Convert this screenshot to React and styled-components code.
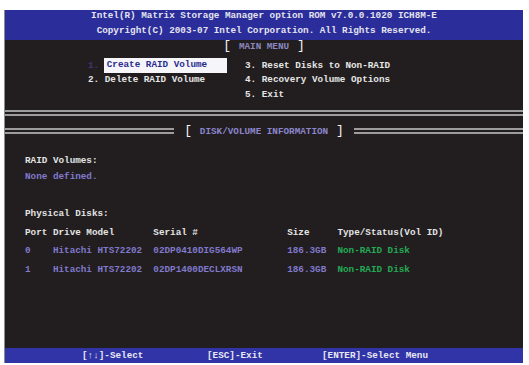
import React from "react";
import styled, { createGlobalStyle } from "styled-components";

const GlobalStyle = createGlobalStyle`
  html, body { margin: 0; padding: 0; background: #ffffff; }
  * { box-sizing: border-box; }
`;

const Screen = styled.div`
  margin: 10px 0 0 4px;
  width: 519px;
  height: 353px;
  background: #221e1f;
  border-left: 1px solid #8c8c8c;
  display: flex;
  flex-direction: column;
  font-family: "Liberation Mono", "DejaVu Sans Mono", monospace;
  font-size: 9.3px;
  font-weight: 700;
  color: #e2e2e2;
  white-space: pre;
  overflow: hidden;
`;

const Header = styled.header`
  height: 30px;
  flex-shrink: 0;
  background: #2b2d9b;
  display: flex;
  flex-direction: column;
  align-items: center;
  color: #e4e4ee;
`;

const HeaderLine = styled.div`
  line-height: ${(p) => p.$h}px;
  margin-top: ${(p) => p.$mt || 0}px;
`;

const Title = styled.div`
  text-align: center;
  line-height: 12px;
  height: 12px;
  color: #f0f0f0;
`;

const Bracket = styled.span`
  font-size: 13px;
  font-weight: 400;
  color: #f2f2f2;
`;

const Dim = styled.span`
  color: ${(p) => p.$c || "#8a84c4"};
`;

const MenuGrid = styled.div`
  margin-top: 6px;
  padding-left: 83px;
  display: grid;
  grid-template-columns: 157px auto;
  grid-auto-rows: 14.5px;
  align-items: center;
`;

const MenuItem = styled.div`
  display: flex;
  align-items: center;
  height: 14.5px;
  color: #e6e6e6;
`;

const Highlight = styled.span`
  display: inline-block;
  width: 123px;
  height: 14.5px;
  line-height: 14.5px;
  margin-left: -1px;
  padding-left: 3px;
  background: #f5f5fa;
  color: #2a2c8e;
`;

const DoubleLine = styled.div`
  height: 6px;
  border-top: 2px solid #9d9d9d;
  border-bottom: 2px solid #9d9d9d;
  flex: ${(p) => (p.$flex ? 1 : "none")};
  margin-top: ${(p) => p.$mt || 0}px;
`;

const SectionRow = styled.div`
  margin-top: 11px;
  height: 8px;
  display: flex;
  align-items: center;
`;

const SectionTitle = styled.span`
  line-height: 8px;
  margin: 0 10px;
  color: #f0f0f0;
`;

const Content = styled.div`
  padding-left: 20px;
`;

const Line = styled.div`
  line-height: ${(p) => p.$h || 16}px;
  height: ${(p) => p.$h || 16}px;
  margin-top: ${(p) => p.$mt || 0}px;
  color: ${(p) => p.$c || "#e4e4e4"};
`;

const Table = styled.div`
  display: grid;
  grid-template-columns: 5ch 18ch 24ch 9ch auto;
  grid-auto-rows: 18.5px;
  align-items: center;
`;

const Cell = styled.span`
  color: ${(p) => p.$c || "#e4e4e4"};
`;

const Footer = styled.footer`
  margin-top: auto;
  height: 15px;
  flex-shrink: 0;
  background: #3034a6;
  display: flex;
  align-items: center;
  padding-left: 77px;
  color: #e8e8f0;
`;

const FooterItem = styled.span`
  width: ${(p) => p.$w || "auto"};
  line-height: 15px;
`;

const disks = [
  ["0", "Hitachi HTS72202", "02DP0410DIG564WP", "186.3GB", "Non-RAID Disk"],
  ["1", "Hitachi HTS72202", "02DP1400DECLXRSN", "186.3GB", "Non-RAID Disk"],
];

export default function App() {
  const purple = "#8079cc";
  const green = "#22aa55";
  return (
    <>
      <GlobalStyle />
      <Screen>
        <Header>
          <HeaderLine $h={11}>
            Intel(R) Matrix Storage Manager option ROM v7.0.0.1020 ICH8M-E
          </HeaderLine>
          <HeaderLine $h={12} $mt={4}>
            Copyright(C) 2003-07 Intel Corporation. All Rights Reserved.
          </HeaderLine>
        </Header>

        <Title>
          <Bracket>[ </Bracket>
          <Dim $c="#8b87bf">MAIN MENU</Dim>
          <Bracket> ]</Bracket>
        </Title>

        <MenuGrid>
          <MenuItem>
            <Dim $c="#3b366f">1. </Dim>
            <Highlight>Create RAID Volume</Highlight>
          </MenuItem>
          <MenuItem>3. Reset Disks to Non-RAID</MenuItem>
          <MenuItem>2. Delete RAID Volume</MenuItem>
          <MenuItem>4. Recovery Volume Options</MenuItem>
          <MenuItem />
          <MenuItem>5. Exit</MenuItem>
        </MenuGrid>

        <DoubleLine $mt={8.5} />

        <SectionRow>
          <DoubleLine $flex />
          <SectionTitle>
            <Bracket>[ </Bracket>
            <Dim $c="#8b86cc">DISK/VOLUME INFORMATION</Dim>
            <Bracket> ]</Bracket>
          </SectionTitle>
          <DoubleLine $flex />
        </SectionRow>

        <Content>
          <Line $mt={18}>RAID Volumes:</Line>
          <Line $c={purple}>None defined.</Line>
          <Line $mt={20} $h={18}>Physical Disks:</Line>
          <Table>
            <Cell>Port</Cell>
            <Cell>Drive Model</Cell>
            <Cell>Serial #</Cell>
            <Cell>Size</Cell>
            <Cell>Type/Status(Vol ID)</Cell>
            {disks.map((d) => (
              <React.Fragment key={d[0]}>
                <Cell $c={purple}>{d[0]}</Cell>
                <Cell $c={purple}>{d[1]}</Cell>
                <Cell $c={purple}>{d[2]}</Cell>
                <Cell $c={purple}>{d[3]}</Cell>
                <Cell $c={green}>{d[4]}</Cell>
              </React.Fragment>
            ))}
          </Table>
        </Content>

        <Footer>
          <FooterItem $w="125px">[↑↓]-Select</FooterItem>
          <FooterItem $w="115px">[ESC]-Exit</FooterItem>
          <FooterItem>[ENTER]-Select Menu</FooterItem>
        </Footer>
      </Screen>
    </>
  );
}
